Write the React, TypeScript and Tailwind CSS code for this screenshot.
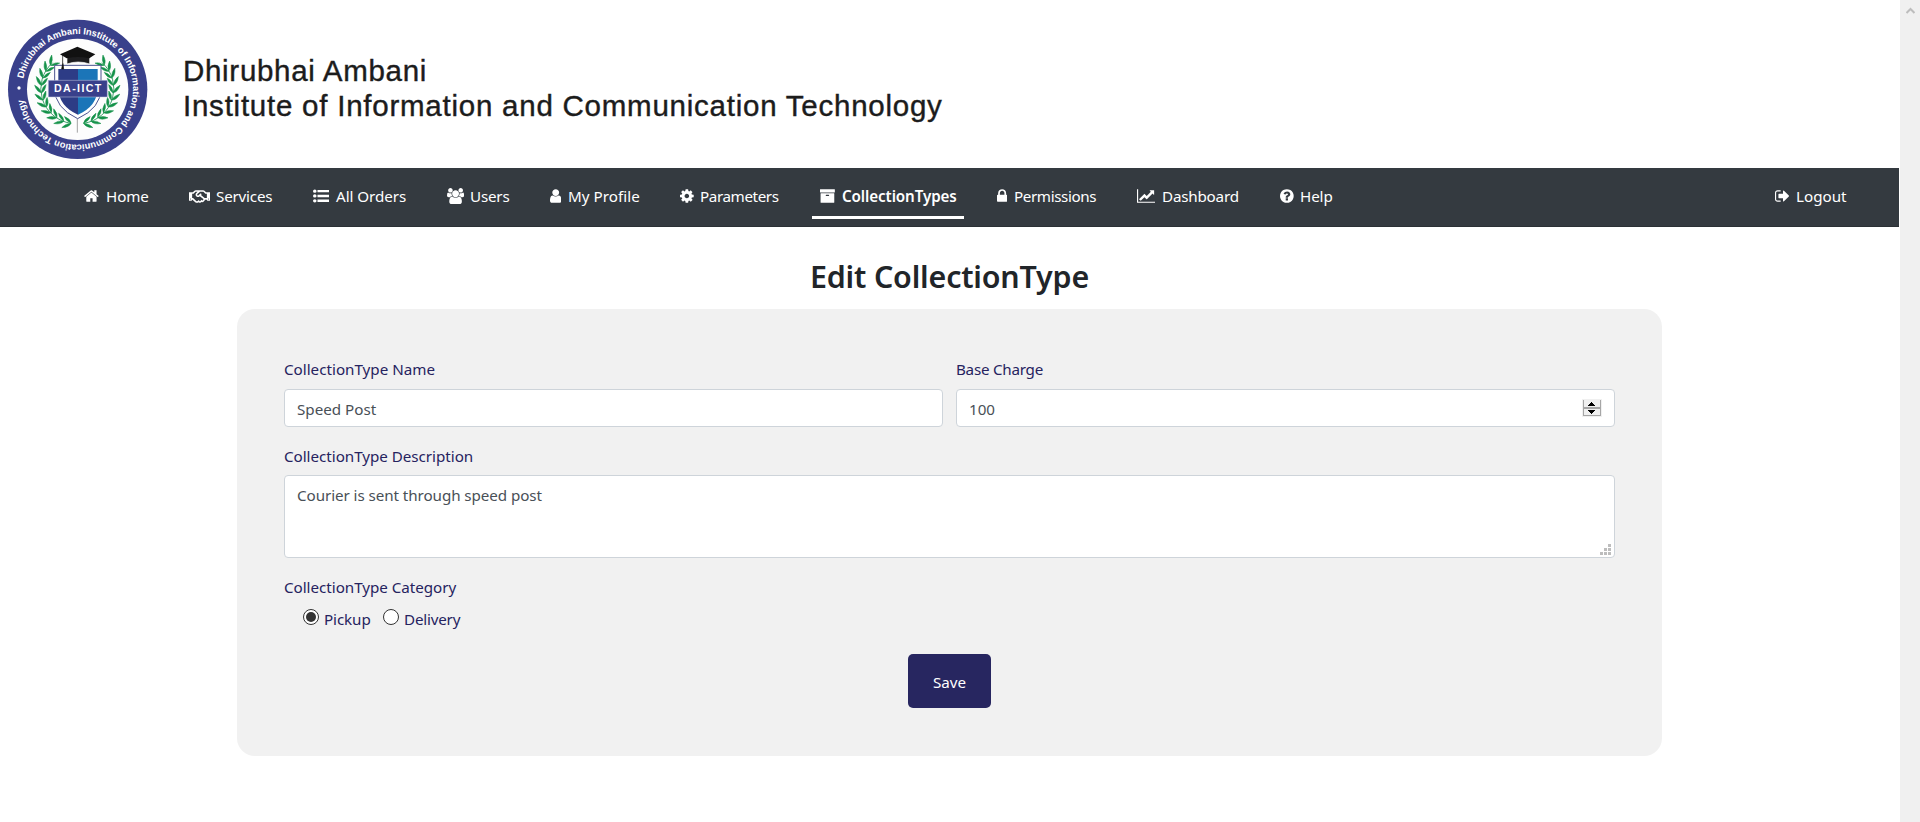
import React from "react";
import { FaRegHandshake } from "react-icons/fa";

const PATHS = {
  home: "M1472 992v480q0 26-19 45t-45 19h-384v-384h-256v384h-384q-26 0-45-19t-19-45v-480q0-1 .5-3t.5-3l575-474 575 474q1 2 1 6zm223-69l-62 74q-8 9-21 11h-3q-13 0-21-7l-692-577-692 577q-12 8-24 7-13-2-21-11l-62-74q-8-10-7-23.5t11-21.5l719-599q32-26 76-26t76 26l244 204v-195q0-14 9-23t23-9h192q14 0 23 9t9 23v408l219 182q10 8 11 21.5t-7 23.5z",
  list: "M0 350a200 180 0 1 0 400 0a200 180 0 1 0-400 0zM0 890a200 180 0 1 0 400 0a200 180 0 1 0-400 0zM0 1430a200 180 0 1 0 400 0a200 180 0 1 0-400 0zM500 215h1292v270h-1292zM500 755h1292v270h-1292zM500 1295h1292v270h-1292z",
  users:
    "M593 896q-162 5-265 128h-134q-82 0-138-40.5t-56-118.5q0-353 124-353 6 0 43.5 21t97.5 42.5 119 21.5q67 0 133-23-5 37-5 66 0 139 81 256zm1071 637q0 120-73 189.5t-194 69.5h-874q-121 0-194-69.5t-73-189.5q0-53 3.5-103.5t14-109 26.5-108.5 43-97.5 62-81 85.5-53.5 111.5-20q10 0 43 21.5t73 48 107 48 135 21.5 135-21.5 107-48 73-48 43-21.5q61 0 111.5 20t85.5 53.5 62 81 43 97.5 26.5 108.5 14 109 3.5 103.5zm-1024-1277q0 106-75 181t-181 75-181-75-75-181 75-181 181-75 181 75 75 181zm704 384q0 159-112.5 271.5t-271.5 112.5-271.5-112.5-112.5-271.5 112.5-271.5 271.5-112.5 271.5 112.5 112.5 271.5zm576 225q0 78-56 118.5t-138 40.5h-134q-103-123-265-128 81-117 81-256 0-29-5-66 66 23 133 23 59 0 119-21.5t97.5-42.5 43.5-21q124 0 124 353zm-128-609q0 106-75 181t-181 75-181-75-75-181 75-181 181-75 181 75 75 181z",
  user: "M1536 1399q0 109-62.5 187t-150.5 78h-854q-88 0-150.5-78t-62.5-187q0-85 8.5-160.5t31.5-152 58.5-131 94-89 134.5-34.5q131 128 313 128t313-128q76 0 134.5 34.5t94 89 58.5 131 31.5 152 8.5 160.5zm-256-887q0 159-112.5 271.5t-271.5 112.5-271.5-112.5-112.5-271.5 112.5-271.5 271.5-112.5 271.5 112.5 112.5 271.5z",
  cog: "M1152 896q0-106-75-181t-181-75-181 75-75 181 75 181 181 75 181-75 75-181zm512-109v222q0 12-8 23t-20 13l-185 28q-19 54-39 91 35 50 107 138 10 12 10 25t-9 23q-27 37-99 108t-94 71q-12 0-26-9l-138-108q-44 23-91 38-16 136-29 186-7 28-36 28h-222q-14 0-24.5-8.5t-11.5-21.5l-28-184q-49-16-90-37l-141 107q-10 9-25 9-14 0-25-11-126-114-165-168-7-10-7-23 0-12 8-23 15-21 51-66.5t54-70.5q-27-50-41-99l-183-27q-13-2-21-12.5t-8-23.5v-222q0-12 8-23t19-13l186-28q14-46 39-92-40-57-107-138-10-12-10-24 0-10 9-23 26-36 98.5-107.5t94.5-71.5q13 0 26 10l138 107q44-23 91-38 16-136 29-186 7-28 36-28h222q14 0 24.5 8.5t11.5 21.5l28 184q49 16 90 37l142-107q9-9 24-9 13 0 25 10 129 119 165 170 7 8 7 22 0 12-8 23-15 21-51 66.5t-54 70.5q26 50 41 98l183 28q13 2 21 12.5t8 23.5z",
  archive:
    "M1088 832q0-26-19-45t-45-19h-256q-26 0-45 19t-19 45 19 45 45 19h256q26 0 45-19t19-45zm576-192v960q0 26-19 45t-45 19h-1408q-26 0-45-19t-19-45v-960q0-26 19-45t45-19h1408q26 0 45 19t19 45zm64-448v256q0 26-19 45t-45 19h-1536q-26 0-45-19t-19-45v-256q0-26 19-45t45-19h1536q26 0 45 19t19 45z",
  lock: "M640 768h512v-192q0-106-75-181t-181-75-181 75-75 181v192zm832 96v576q0 40-28 68t-68 28h-960q-40 0-68-28t-28-68v-576q0-40 28-68t68-28h32v-192q0-184 132-316t316-132 316 132 132 316v192h32q40 0 68 28t28 68z",
  chart:
    "M2048 1536v128h-2048v-1536h128v1408h1920zm-128-1248v435q0 21-19.5 29.5t-35.5-7.5l-121-121-633 633q-10 10-23 10t-23-10l-233-233-416 416-192-192 585-585q10-10 23-10t23 10l233 233 464-464-121-121q-16-16-7.5-35.5t29.5-19.5h435q14 0 23 9t9 23z",
  help: "M1024 1376v-192q0-14-9-23t-23-9h-192q-14 0-23 9t-9 23v192q0 14 9 23t23 9h192q14 0 23-9t9-23zm256-672q0-88-55.5-163t-138.5-116-170-41q-243 0-371 213-15 24 8 42l132 100q7 6 19 6 16 0 25-12 53-68 86-92 34-24 86-24 48 0 85.5 26t37.5 59q0 38-20 61t-68 45q-63 28-115.5 86.5t-52.5 125.5v36q0 14 9 23t23 9h192q14 0 23-9t9-23q0-19 21.5-49.5t54.5-49.5q32-18 49-28.5t46-35 44.5-48 28-60.5 12.5-81zm384 192q0 209-103 385.5t-279.5 279.5-385.5 103-385.5-103-279.5-279.5-103-385.5 103-385.5 279.5-279.5 385.5-103 385.5 103 279.5 279.5 103 385.5z",
  logout:
    "M704 1440q0 4 1 20t.5 26.5-3 23.5-10 19.5-20.5 6.5h-320q-119 0-203.5-84.5t-84.5-203.5v-704q0-119 84.5-203.5t203.5-84.5h320q13 0 22.5 9.5t9.5 22.5q0 4 1 20t.5 26.5-3 23.5-10 19.5-20.5 6.5h-320q-66 0-113 47t-47 113v704q0 66 47 113t113 47h312l11.5 1 11.5 3 8 5.5 7 9 2 13.5zm928-544q0 26-19 45l-544 544q-19 19-45 19t-45-19-19-45v-288h-448q-26 0-45-19t-19-45v-384q0-26 19-45t45-19h448v-288q0-26 19-45t45-19 45 19l544 544q19 19 19 45z",
};

type IconName = keyof typeof PATHS;

function Icon({ name, x = 0, w }: { name: IconName; x?: number; w: number }) {
  return (
    <svg viewBox={`${x} 0 ${w} 1792`} width={w / 112} height={16} fill="currentColor" className="block">
      <path d={PATHS[name]} />
    </svg>
  );
}

type NavItem = { label: string; icon: React.ReactNode; width: string; slot: string; text: string; active?: boolean };

const NAV: NavItem[] = [
  { label: "Home", icon: <Icon name="home" x={64} w={1664} />, width: "w-[105px]", slot: "w-[22px]", text: "tracking-[-0.1px]" },
  { label: "Services", icon: <FaRegHandshake className="h-[17px] w-[21px]" />, width: "w-[124px]", slot: "w-[27px]", text: "tracking-[-0.2px]" },
  { label: "All Orders", icon: <Icon name="list" w={1792} />, width: "w-[134px]", slot: "w-[23px]", text: "tracking-[-0.05px]" },
  { label: "Users", icon: <Icon name="users" w={1920} />, width: "w-[103px]", slot: "w-[23px]", text: "tracking-[-0.2px]" },
  { label: "My Profile", icon: <Icon name="user" x={256} w={1280} />, width: "w-[130px]", slot: "w-[18px]", text: "tracking-[0.03px]" },
  { label: "Parameters", icon: <Icon name="cog" x={128} w={1536} />, width: "w-[140px]", slot: "w-[20px]", text: "tracking-[-0.4px]" },
  { label: "CollectionTypes", icon: <Icon name="archive" x={64} w={1664} />, width: "w-[177px]", slot: "w-[22px]", text: "font-semibold tracking-[-0.1px]", active: true },
  { label: "Permissions", icon: <Icon name="lock" x={320} w={1152} />, width: "w-[140px]", slot: "w-[17px]", text: "tracking-[-0.4px]" },
  { label: "Dashboard", icon: <Icon name="chart" w={2048} />, width: "w-[143px]", slot: "w-[25px]", text: "tracking-[-0.2px]" },
  { label: "Help", icon: <Icon name="help" x={128} w={1536} />, width: "w-[60px]", slot: "w-[20px]", text: "tracking-[-0.1px]" },
];

function NavEntry({ item }: { item: NavItem }) {
  return (
    <li className={`flex h-full flex-none pt-[8px] ${item.width}`}>
      <a className={`-ml-2 flex h-[43px] items-start border-b-3 px-2 pt-[8px] ${item.active ? "w-[152px] border-white" : "border-transparent"}`}>
        <span className={`flex-none pt-[4px] ${item.slot}`}>{item.icon}</span>
        <span className={`whitespace-nowrap leading-6 ${item.text}`}>{item.label}</span>
      </a>
    </li>
  );
}

const LEAVES = Array.from({ length: 11 }, (_, i) => {
  const deg = 100 + i * 12.2;
  const a = (deg * Math.PI) / 180;
  return { deg, x: 232 + 108 * Math.cos(a), y: 236 + 105 * Math.sin(a) };
});

function Laurel() {
  return (
    <g fill="#15924a" stroke="#15924a" strokeWidth="1.5">
      <path d="M213 340A107 105 0 0 1 158 158" fill="none" strokeWidth="2.5" />
      {LEAVES.map((l) => (
        <g key={l.deg} transform={`translate(${l.x} ${l.y}) rotate(${l.deg + 90})`}>
          <path d="M0 0Q4 -14 25 -18Q18 -5 0 0Z" />
          <path d="M0 0Q4 12 23 16Q18 4 0 0Z" />
        </g>
      ))}
    </g>
  );
}

function Seal() {
  return (
    <svg viewBox="0 0 480 480" className="h-[160px] w-[160px]">
      <circle cx="233" cy="238" r="209" fill="#39408b" />
      <circle cx="233" cy="238" r="152" fill="#fdfdfd" />
      <defs>
        <path id="ring" d="M67 238A166 166 0 0 1 399 238A166 166 0 0 1 67 238" />
      </defs>
      <g transform="rotate(11 233 238)">
        <text fill="#fff" fontSize="28" fontWeight="700" fontFamily="Liberation Sans, sans-serif" textLength="980">
          <textPath href="#ring" textLength="980">
            Dhirubhai Ambani Institute of Information and Communication Technology
          </textPath>
        </text>
      </g>
      <circle cx="57" cy="234" r="5" fill="#fff" />
      <Laurel />
      <g transform="translate(464 0) scale(-1 1)">
        <Laurel />
      </g>
      <path d="M232 322V368" stroke="#777" strokeWidth="2" />
      <path d="M164 166H303V235Q303 294 233 326Q164 294 164 235Z" fill="#fff" stroke="#4b538f" strokeWidth="3" />
      <path d="M175 177H234V314Q175 287 175 233Z" fill="#2d3c86" />
      <path d="M234 177H293V233Q293 287 234 314Z" fill="#1b75b8" />
      <path d="M145 211H322V261H145Z" fill="#39408b" stroke="#c9cce2" strokeWidth="1.5" />
      <text x="162" y="247" fill="#fff" fontSize="32" fontWeight="700" fontFamily="Liberation Sans, sans-serif" textLength="142">
        DA-IICT
      </text>
      <path d="M201 139V162Q234 150 269 162V139Z" fill="#1d1d1f" stroke="#fff" strokeWidth="2" />
      <path d="M180 133L232 110L286 133L268 145Q234 137 200 145Z" fill="#111" />
      <path d="M188 135V160L185 177H191L189 160" fill="#111" stroke="#111" strokeWidth="2" />
    </svg>
  );
}

function Spinner() {
  return (
    <svg viewBox="0 0 20 18" width="20" height="18" shapeRendering="crispEdges">
      <path d="M0 0H20V18H0Z" fill="#f0f0f0" />
      <path d="M1 1H2V17H1ZM18 1H19V17H18ZM1 8H19V10H1ZM1 16H19V17H1Z" fill="#a6a6a6" />
      <path d="M9 3H10V4H11V5H12V6H13V7H6V6H7V5H8V4H9ZM6 11H13V12H12V13H11V14H10V15H9V14H8V13H7V12H6Z" fill="#000" />
    </svg>
  );
}

function Grip() {
  return (
    <svg viewBox="0 0 11 11" width="11" height="11" shapeRendering="crispEdges" fill="#bdbdbd">
      <path d="M8 0h3v3h-3zM4 4h3v3h-3zM8 4h3v3h-3zM0 8h3v3h-3zM4 8h3v3h-3zM8 8h3v3h-3z" />
    </svg>
  );
}

function Radio({ checked }: { checked?: boolean }) {
  return (
    <span className="mt-[2px] flex h-4 w-4 flex-none items-center justify-center rounded-full border border-[#333] bg-white">
      {checked && <span className="h-[10px] w-[10px] rounded-full bg-[#333]" />}
    </span>
  );
}

const FIELD = "w-full rounded-[4px] border border-[#ced4da] bg-white px-3 leading-6 text-[#495057] outline-none";

export default function App() {
  return (
    <div className="flex h-[822px] w-[1920px] overflow-hidden bg-white font-['Noto_Sans',sans-serif] text-[15.2px] text-[#26235f]">
      <div className="flex w-[1899px] flex-none flex-col">
        <header className="flex h-[168px] flex-none pt-[10px]">
          <Seal />
          <div className="mt-[43px] ml-[23px] self-start font-['Liberation_Sans',sans-serif] text-[29.5px] leading-[35px] tracking-[0.76px] whitespace-nowrap text-[#1c1c1c] [-webkit-text-stroke:0.4px_#1c1c1c]">
            <p className="tracking-[0.7px]">Dhirubhai Ambani</p>
            <p>Institute of Information and Communication Technology</p>
          </div>
        </header>

        <nav className="flex h-[59px] flex-none justify-between border-b border-[#2b3035] bg-[#343a40] pr-[52px] pl-[84px] text-white">
          <ul className="flex">
            {NAV.map((item) => (
              <NavEntry key={item.label} item={item} />
            ))}
          </ul>
          <ul className="flex">
            <NavEntry
              item={{ label: "Logout", icon: <Icon name="logout" x={64} w={1664} />, width: "w-[72px]", slot: "w-[21px]", text: "tracking-[0px]" }}
            />
          </ul>
        </nav>

        <main className="flex flex-col items-center">
          <h1 className="mt-[31px] h-[51px] text-[30.4px] leading-[38px] font-semibold tracking-[-0.18px] whitespace-nowrap text-[#212529]">
            Edit CollectionType
          </h1>
          <form className="flex h-[447px] w-[1425px] flex-col rounded-[18px] bg-[#f1f1f1] px-[47px] pt-[48px]">
            <div className="grid grid-cols-2 gap-x-[13px]">
              <div>
                <label className="block h-[32px] leading-6">CollectionType Name</label>
                <input className={`block h-[38px] pt-[2px] ${FIELD}`} defaultValue="Speed Post" />
              </div>
              <div>
                <label className="block h-[32px] leading-6 tracking-[-0.25px]">Base Charge</label>
                <div className={`flex h-[38px] items-center justify-between ${FIELD}`}>
                  <span className="pt-[2px]">100</span>
                  <Spinner />
                </div>
              </div>
            </div>
            <div className="mt-[17px]">
              <label className="block h-[31px] leading-6 tracking-[-0.03px]">CollectionType Description</label>
              <div className={`flex h-[83px] justify-between pt-[7px] ${FIELD}`}>
                <span className="tracking-[-0.07px]">Courier is sent through speed post</span>
                <span className="-mr-[9px] flex items-end pb-[2px]">
                  <Grip />
                </span>
              </div>
            </div>
            <p className="mt-[17px] leading-6 tracking-[-0.03px]">CollectionType Category</p>
            <div className="mt-[8px] flex h-6 pl-[19px]">
              <label className="flex w-[80px] gap-[5px] leading-6 tracking-[-0.1px]">
                <Radio checked />
                Pickup
              </label>
              <label className="flex gap-[5px] leading-6 tracking-[-0.2px]">
                <Radio />
                Delivery
              </label>
            </div>
            <button type="button" className="mt-[23px] h-[54px] w-[83px] self-center rounded-[5px] bg-[#272660] pt-[2px] text-white">
              Save
            </button>
          </form>
        </main>
      </div>
      <aside className="ml-px flex w-[20px] flex-none justify-center bg-[#f0f0f0] pt-[7px]">
        <svg viewBox="0 0 9 7" width="9" height="7" fill="none" stroke="#bdbdbd" strokeWidth="2">
          <path d="M0.5 6L4.5 2L8.5 6" />
        </svg>
      </aside>
    </div>
  );
}
